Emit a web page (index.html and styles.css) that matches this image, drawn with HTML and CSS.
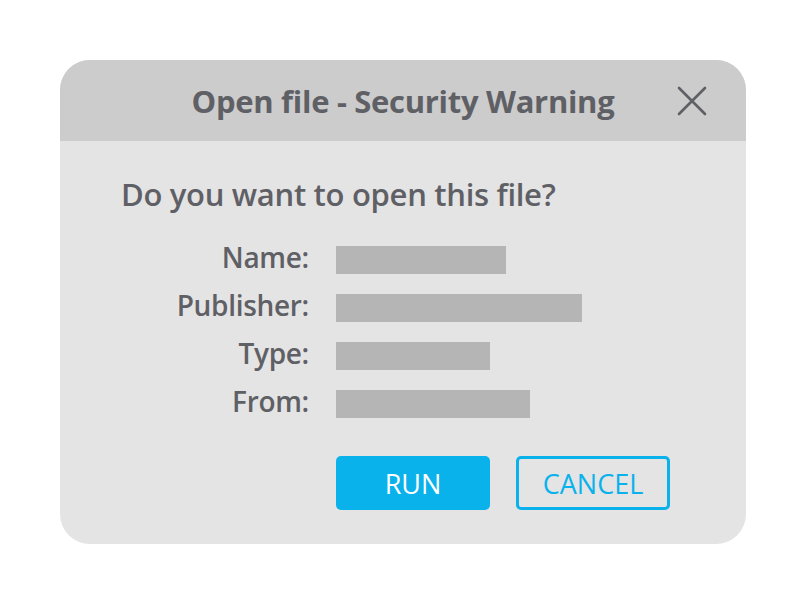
FILE: index.html
```html
<!DOCTYPE html>
<html>
<head>
<meta charset="utf-8">
<link rel="stylesheet" href="styles.css">
</head>
<body>
<div class="dialog">
  <div class="titlebar">
    <span></span>
    <h1 class="title">Open file - Security Warning</h1>
    <button class="close" aria-label="Close">
      <svg width="30" height="30" viewBox="0 0 30 30"><path d="M2 2 L28 28 M28 2 L2 28" stroke="#5f6065" stroke-width="2.6" stroke-linecap="round" fill="none"/></svg>
    </button>
  </div>
  <div class="content">
    <p class="question">Do you want to open this file?</p>
    <div class="fields">
      <span class="label">Name:</span><span class="bar" style="width:170px"></span>
      <span class="label">Publisher:</span><span class="bar" style="width:246px"></span>
      <span class="label">Type:</span><span class="bar" style="width:154px"></span>
      <span class="label">From:</span><span class="bar" style="width:194px"></span>
    </div>
    <div class="actions">
      <button class="btn btn-run">RUN</button>
      <button class="btn btn-cancel">CANCEL</button>
    </div>
  </div>
</div>
</body>
</html>
```
FILE: styles.css
```css
html, body {
  margin: 0;
  padding: 0;
  background: #ffffff;
}
body {
  font-family: "Open Sans", "Noto Sans", sans-serif;
  color: #5f6065;
}
.dialog {
  margin: 60px 0 0 60px;
  width: 686px;
  height: 484px;
  border-radius: 30px;
  overflow: hidden;
  background: #e4e4e4;
}
.titlebar {
  height: 81px;
  background: #cccccc;
  display: grid;
  grid-template-columns: 1fr auto 1fr;
  align-items: center;
}
.title {
  margin: 0;
  font-size: 31px;
  font-weight: 700;
  letter-spacing: -0.3px;
  color: #5f6065;
}
.close {
  justify-self: end;
  margin-right: 39px;
  padding: 0;
  border: 0;
  background: none;
  width: 30px;
  height: 30px;
  display: flex;
}
.content {
  padding-left: 61px;
}
.question {
  margin: 0;
  padding-top: 33px;
  font-size: 31px;
  font-weight: 600;
  line-height: 40px;
  letter-spacing: -0.3px;
}
.fields {
  margin-top: 32px;
  display: grid;
  grid-template-columns: 188px auto;
  column-gap: 27px;
  row-gap: 20px;
  justify-items: start;
  align-items: center;
}
.label {
  justify-self: end;
  font-size: 28px;
  font-weight: 600;
  line-height: 28px;
  letter-spacing: -0.3px;
  position: relative;
  top: -3px;
}
.bar {
  height: 28px;
  background: #b5b5b5;
}
.actions {
  margin-top: 38px;
  margin-left: 215px;
  display: flex;
  gap: 26px;
}
.btn {
  width: 154px;
  height: 54px;
  border-radius: 5px;
  font-family: "Open Sans", "Noto Sans", sans-serif;
  font-size: 27px;
  font-weight: 500;
  box-sizing: border-box;
  cursor: pointer;
}
.btn-run {
  background: #0ab2ec;
  border: 0;
  color: #ffffff;
}
.btn-cancel {
  background: transparent;
  border: 3px solid #0ab2ec;
  color: #0ab2ec;
}
```
